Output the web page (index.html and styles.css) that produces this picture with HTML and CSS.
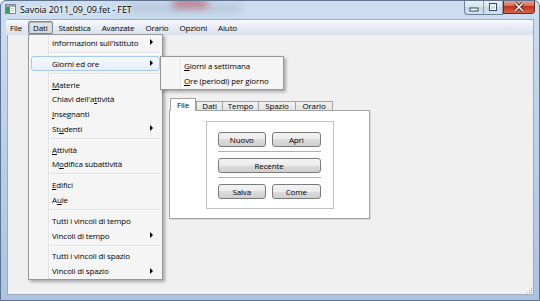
FILE: index.html
```html
<html>
<head>
<link rel="stylesheet" href="styles.css">
</head>
<body>
<div class="window">
  <div class="glass glass-dark"></div>
  <div class="glass glass-red"></div>
  <div class="titlebar">
    <svg class="app-icon" width="11" height="10" viewBox="0 0 11 10">
      <rect x="0.5" y="0.5" width="10" height="9" fill="#fff" stroke="#7c8796"/>
      <rect x="1" y="1" width="9" height="2" fill="#9aa7b8"/>
      <rect x="1" y="3" width="4" height="6" fill="#3f9b5a"/>
      <rect x="6" y="4" width="3" height="1" fill="#b8c2cf"/>
      <rect x="6" y="6" width="3" height="1" fill="#b8c2cf"/>
    </svg>
    <span class="title">Savoia 2011_09_09.fet - FET</span>
    <div class="caption">
      <div class="cap-group">
        <div class="cap-btn">
          <svg width="10" height="10" viewBox="0 0 10 10"><rect x="1" y="6" width="8" height="3" fill="#fff" stroke="#3d4a5c" stroke-width="1"/></svg>
        </div>
        <div class="cap-btn">
          <svg width="10" height="10" viewBox="0 0 10 10"><rect x="1.5" y="1.5" width="7" height="7" fill="none" stroke="#3d4a5c" stroke-width="1"/><rect x="2.5" y="3" width="5" height="4.5" fill="none" stroke="#fff" stroke-width="1"/></svg>
        </div>
      </div>
      <div class="cap-close">
        <svg width="12" height="10" viewBox="0 0 12 10"><path d="M2 1 L10 9 M10 1 L2 9" stroke="#5a1e12" stroke-width="3.2"/><path d="M2 1 L10 9 M10 1 L2 9" stroke="#fff" stroke-width="1.6"/></svg>
      </div>
    </div>
  </div>

  <div class="client">
    <div class="menubar">
      <span class="mb-item">File</span>
      <span class="mb-item active">Dati</span>
      <span class="mb-item">Statistica</span>
      <span class="mb-item">Avanzate</span>
      <span class="mb-item">Orario</span>
      <span class="mb-item">Opzioni</span>
      <span class="mb-item">Aiuto</span>
    </div>

    <div class="central">
      <div class="tabs">
        <div class="tabbar">
          <div class="tab current" style="width:26px">File</div>
          <div class="tab" style="width:27px">Dati</div>
          <div class="tab" style="width:37px">Tempo</div>
          <div class="tab" style="width:38px">Spazio</div>
          <div class="tab" style="width:38px">Orario</div>
        </div>
        <div class="pane">
          <div class="group">
            <div class="btn-row">
              <div class="button">Nuovo</div>
              <div class="button">Apri</div>
            </div>
            <div class="hline"></div>
            <div class="btn-row">
              <div class="button wide">Recente</div>
            </div>
            <div class="hline"></div>
            <div class="btn-row">
              <div class="button">Salva</div>
              <div class="button">Come</div>
            </div>
          </div>
        </div>
      </div>
    </div>

    <svg class="grip" width="7" height="7" viewBox="0 0 7 7">
      <rect x="5" y="1" width="1" height="1" fill="#a9a9a9"/>
      <rect x="3" y="3" width="1" height="1" fill="#a9a9a9"/>
      <rect x="5" y="3" width="1" height="1" fill="#a9a9a9"/>
      <rect x="1" y="5" width="1" height="1" fill="#a9a9a9"/>
      <rect x="3" y="5" width="1" height="1" fill="#a9a9a9"/>
      <rect x="5" y="5" width="1" height="1" fill="#a9a9a9"/>
    </svg>

    <div class="menu">
      <div class="mi">Informazioni sull'Istituto<span class="arrow"></span></div>
      <div class="sep"></div>
      <div class="mi hover">Giorni ed ore<span class="arrow"></span></div>
      <div class="sep"></div>
      <div class="mi"><u>M</u>aterie</div>
      <div class="mi">Chiavi dell'a<u>t</u>tività</div>
      <div class="mi"><u>I</u>nsegnanti</div>
      <div class="mi">St<u>u</u>denti<span class="arrow"></span></div>
      <div class="sep"></div>
      <div class="mi"><u>A</u>ttività</div>
      <div class="mi">M<u>o</u>difica subattività</div>
      <div class="sep"></div>
      <div class="mi"><u>E</u>difici</div>
      <div class="mi">A<u>u</u>le</div>
      <div class="sep"></div>
      <div class="mi">Tutti i vincoli di tempo</div>
      <div class="mi">Vincoli di tempo<span class="arrow"></span></div>
      <div class="sep"></div>
      <div class="mi">Tutti i vincoli di spazio</div>
      <div class="mi">Vincoli di spazio<span class="arrow"></span></div>
    </div>

    <div class="menu submenu">
      <div class="mi"><u>G</u>iorni a settimana</div>
      <div class="mi"><u>O</u>re (periodi) per giorno</div>
    </div>
  </div>
</div>
</body>
</html>
```

FILE: styles.css
```css
body
{
margin:0;
font-family:"Open Sans", "Noto Sans", sans-serif;
font-size:8px;
letter-spacing:-0.15px;
color:#000;
}
.window
{
width:540px;
height:301px;
box-sizing:border-box;
display:flex;
flex-direction:column;
padding:0 5px 5px 6px;
background:linear-gradient(#cddef1, #bed4ec 35%, #aac4e2);
border:1px solid #5f7390;
border-radius:6px 6px 0 0;
position:relative;
overflow:hidden;
}
.glass
{
position:absolute;
filter:blur(4px);
pointer-events:none;
}
.glass-dark
{
left:120px;
top:4px;
width:120px;
height:6px;
background:rgba(120,135,155,0.35);
}
.glass-red
{
left:172px;
top:-2px;
width:34px;
height:8px;
background:rgba(190,60,70,0.7);
}
.titlebar
{
height:18px;
display:flex;
align-items:flex-start;
margin:0 -1px 0 -2px;
position:relative;
}
.app-icon
{
margin:3px 0 0 0;
}
.title
{
margin:2px 0 0 4px;
font-size:9px;
letter-spacing:-0.1px;
line-height:13px;
text-shadow:0 0 5px #fff, 0 0 3px #fff;
}
.caption
{
margin-left:auto;
display:flex;
margin-top:-1px;
}
.cap-group
{
display:flex;
height:14px;
border:1px solid #6d7f98;
border-top:none;
border-right:none;
border-radius:0 0 0 4px;
background:linear-gradient(#edf3fa, #d5e2f0 50%, #c3d4e8 50%, #d3e1f1);
}
.cap-btn
{
width:18px;
display:flex;
align-items:center;
justify-content:center;
border-right:1px solid #8b9bb1;
}
.cap-close
{
width:32px;
height:14px;
box-sizing:border-box;
display:flex;
align-items:center;
justify-content:center;
border:1px solid #6b2a20;
border-top:none;
border-radius:0 0 4px 0;
background:linear-gradient(#e9a898, #d46a55 50%, #c2331d 50%, #d9654a);
}
.client
{
flex:1;
background:#f0f0f0;
border:1px solid #98abc2;
position:relative;
display:flex;
flex-direction:column;
}
.menubar
{
height:15px;
box-sizing:border-box;
padding:1px 0 0 0;
margin-left:-2px;
display:flex;
background:linear-gradient(#f8f9fc, #e6ebf3 50%, #dbe2ed);
}
.mb-item
{
height:13px;
line-height:11px;
box-sizing:border-box;
padding:0 4px;
margin-right:1px;
border:1px solid transparent;
border-radius:2px;
}
.mb-item:first-child
{
margin-left:2px;
padding-left:1px;
}
.mb-item.active
{
border-color:#80848a;
background:linear-gradient(#e2e6ec, #d3d9e3);
box-shadow:inset 1px 1px 1px rgba(0,0,0,0.2);
}
.central
{
padding:63px 0 0 161px;
}
.tabbar
{
display:flex;
align-items:flex-end;
height:12px;
padding-left:1px;
}
.tab
{
height:9px;
line-height:8px;
box-sizing:border-box;
text-align:center;
border:1px solid #a3a3a3;
border-bottom:none;
margin-left:-1px;
background:linear-gradient(#f2f2f2, #e3e3e3);
}
.tab.current
{
height:13px;
margin-left:0;
margin-bottom:-1px;
margin-right:1px;
line-height:11px;
background:#fff;
position:relative;
z-index:1;
}
.pane
{
width:201px;
height:109px;
box-sizing:border-box;
border:1px solid #a3a3a3;
background:#fff;
box-shadow:1px 1px 0 #dadada;
display:flex;
align-items:center;
justify-content:center;
}
.group
{
width:128px;
height:88px;
box-sizing:border-box;
padding:10px 12px 9px 11px;
border:1px solid #c2c2c2;
}
.btn-row
{
display:flex;
gap:6px;
}
.button
{
width:49px;
height:15px;
line-height:13px;
box-sizing:border-box;
text-align:center;
border:1px solid #7a7a7a;
border-radius:3px;
background:linear-gradient(#f3f3f3, #ebebeb 50%, #dcdcdc 50%, #cfcfcf);
}
.button.wide
{
width:104px;
}
.hline
{
border-top:1px solid #b0b0b0;
margin:4px 0 6px 0;
}
.grip
{
position:absolute;
right:0;
bottom:0;
}
.menu
{
position:absolute;
left:20px;
top:14px;
width:135px;
box-sizing:border-box;
padding:0 2px 1px 2px;
border:1px solid #979797;
background:linear-gradient(to right, transparent 19px, #e2e3e3 19px, #e2e3e3 20px, #fff 20px, #fff 21px, transparent 21px), #f5f5f5;
box-shadow:2px 2px 3px rgba(0,0,0,0.3);
z-index:2;
}
.submenu
{
left:152px;
top:36px;
width:124px;
padding-top:1px;
z-index:3;
}
.mi
{
height:14.8px;
line-height:13px;
box-sizing:border-box;
padding-left:20px;
border:1px solid transparent;
border-radius:3px;
display:flex;
align-items:center;
}
.submenu .mi
{
height:15px;
}
.mi.hover
{
border-color:#a9c9ee;
background:linear-gradient(#f6f9fe, #e5eefb);
}
.arrow
{
margin-left:auto;
margin-right:6px;
border-left:3px solid #000;
border-top:3px solid transparent;
border-bottom:3px solid transparent;
}
.sep
{
height:6px;
margin-left:19px;
background:linear-gradient(transparent 2px, #e0e0e0 2px, #e0e0e0 3px, #fff 3px, #fff 4px, transparent 4px);
}
```
